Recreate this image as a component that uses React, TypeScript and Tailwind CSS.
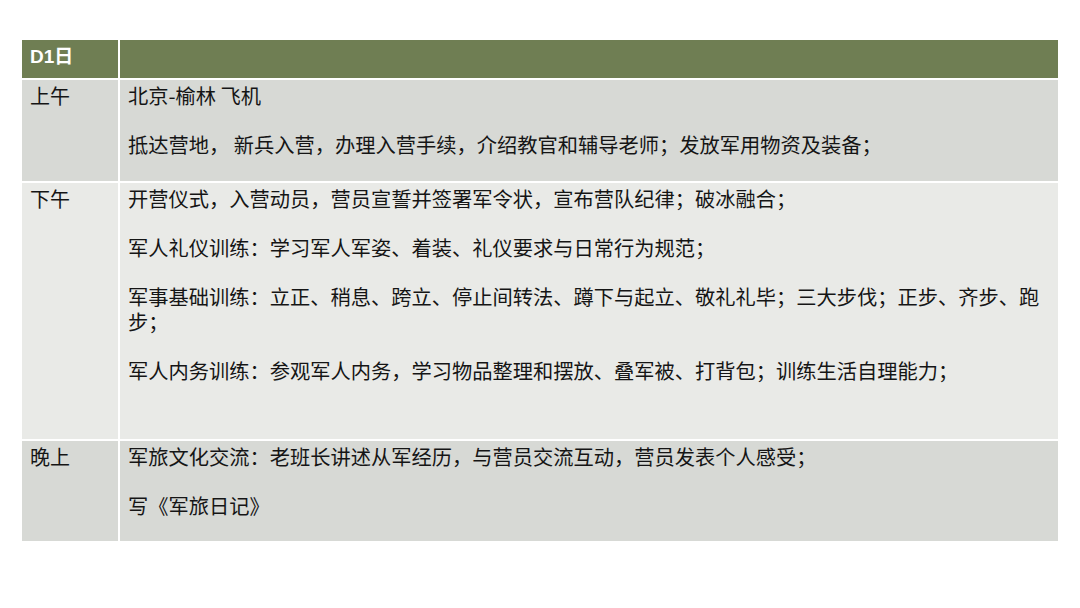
import React from "react";

const rows = [
  {
    label: "上午",
    bg: "bg-[#d7d9d5]",
    h: "h-[101px]",
    paras: ["北京-榆林 飞机", "抵达营地， 新兵入营，办理入营手续，介绍教官和辅导老师；发放军用物资及装备；"],
  },
  {
    label: "下午",
    bg: "bg-[#e9eae7]",
    h: "h-[256px]",
    paras: [
      "开营仪式，入营动员，营员宣誓并签署军令状，宣布营队纪律；破冰融合；",
      "军人礼仪训练：学习军人军姿、着装、礼仪要求与日常行为规范；",
      "军事基础训练：立正、稍息、跨立、停止间转法、蹲下与起立、敬礼礼毕；三大步伐；正步、齐步、跑步；",
      "军人内务训练：参观军人内务，学习物品整理和摆放、叠军被、打背包；训练生活自理能力；",
    ],
  },
  {
    label: "晚上",
    bg: "bg-[#d7d9d5]",
    h: "h-[100px]",
    paras: ["军旅文化交流：老班长讲述从军经历，与营员交流互动，营员发表个人感受；", "写《军旅日记》"],
  },
];

export default function App() {
  return (
    <div
      className="w-[1080px] h-[608px] bg-white pt-[40px] pl-[22px]"
      style={{ fontFamily: '"Noto Sans CJK SC", "Liberation Sans", sans-serif' }}
    >
      <div className="w-[1036px] grid grid-cols-[96px_1fr] gap-x-[2px] gap-y-[2px] text-[#151515]">
        <div className="h-[38px] bg-[#6f7e53] pl-[8px] pt-[4px] text-white font-bold text-[19px] leading-[25px]"
          style={{ fontFamily: '"Liberation Sans", "Noto Sans CJK SC", sans-serif' }}>
          D1日
        </div>
        <div className="h-[38px] bg-[#6f7e53]" />
        {rows.map((r) => (
          <React.Fragment key={r.label}>
            <div className={`${r.bg} ${r.h} pl-[8px] pt-[3px] text-[20px] leading-[25px]`}>{r.label}</div>
            <div className={`${r.bg} ${r.h} pl-[8px] pr-[10px] pt-[3px] text-[20.25px] leading-[25px] flex flex-col gap-[24px]`}>
              {r.paras.map((p, i) => (
                <p key={i}>{p}</p>
              ))}
            </div>
          </React.Fragment>
        ))}
      </div>
    </div>
  );
}
